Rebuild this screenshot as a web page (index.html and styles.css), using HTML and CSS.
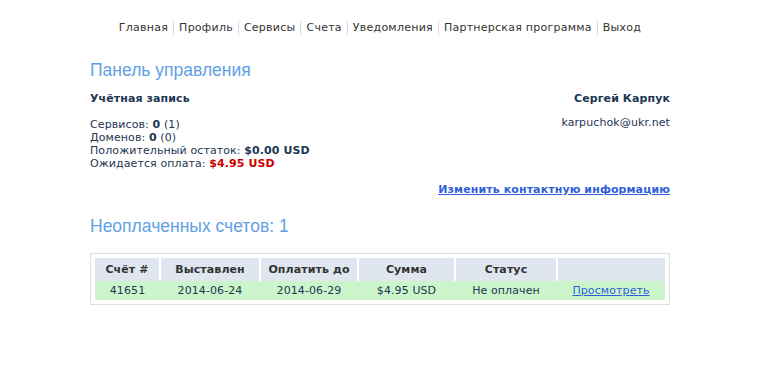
FILE: index.html
```html
<!DOCTYPE html>
<html lang="ru">
<head>
    <meta charset="UTF-8">
    <title>Панель управления</title>
    <link rel="stylesheet" href="styles.css">
</head>
<body>
    <div class="nav">
        <a href="#">Главная</a><span class="sep"></span>
        <a href="#">Профиль</a><span class="sep"></span>
        <a href="#">Сервисы</a><span class="sep"></span>
        <a href="#">Счета</a><span class="sep"></span>
        <a href="#">Уведомления</a><span class="sep"></span>
        <a href="#">Партнерская программа</a><span class="sep"></span>
        <a href="#">Выход</a>
    </div>

    <div class="page">
        <h1>Панель управления</h1>

        <div class="account">
            <div class="account-left">
                <h3>Учётная запись</h3>
                <p>
                    Сервисов: <b>0</b> (1)<br>
                    Доменов: <b>0</b> (0)<br>
                    Положительный остаток: <b>$0.00 USD</b><br>
                    Ожидается оплата: <b class="due">$4.95 USD</b>
                </p>
            </div>
            <div class="account-right">
                <h3>Сергей Карпук</h3>
                <p>karpuchok@ukr.net</p>
            </div>
        </div>

        <div class="edit-link"><a href="#">Изменить контактную информацию</a></div>

        <h2>Неоплаченных счетов: 1</h2>

        <div class="invoices">
            <table>
                <tr>
                    <th class="c1">Счёт #</th>
                    <th class="c2">Выставлен</th>
                    <th class="c3">Оплатить до</th>
                    <th class="c4">Сумма</th>
                    <th class="c5">Статус</th>
                    <th class="c6"></th>
                </tr>
                <tr class="unpaid">
                    <td>41651</td>
                    <td>2014-06-24</td>
                    <td>2014-06-29</td>
                    <td>$4.95 USD</td>
                    <td>Не оплачен</td>
                    <td><a href="#">Просмотреть</a></td>
                </tr>
            </table>
        </div>
    </div>
</body>
</html>
```

FILE: styles.css
```css
body {
    font-family: "DejaVu Sans", Verdana, sans-serif;
    font-size: 11px;
    color: #1e3652;
    margin: 0;
    background: #fff;
}
a {
    color: #2f5fd8;
}
.nav {
    display: flex;
    justify-content: center;
    align-items: center;
    padding-top: 21px;
    height: 14px;
    line-height: 14px;
    letter-spacing: 0.25px;
}
.nav a {
    color: #333;
    text-decoration: none;
}
.nav .sep {
    display: inline-block;
    width: 1px;
    height: 14px;
    background: #d6d9dc;
    margin: 0 5px;
}
.page {
    width: 580px;
    margin: 0 auto;
    letter-spacing: 0.1px;
}
h1, h2 {
    font-family: "Liberation Sans", Arial, sans-serif;
    letter-spacing: 0;
    font-weight: normal;
    color: #62a0e4;
    font-size: 17.5px;
    margin: 0;
}
h1 {
    margin-top: 24px;
    line-height: 22px;
}
h3 {
    font-size: 11px;
    font-weight: bold;
    margin: 0;
}
.account {
    display: flex;
    justify-content: space-between;
    margin-top: 11px;
}
.account h3 {
    line-height: 14px;
}
.account p {
    margin: 12px 0 0;
    line-height: 13px;
}
.account-right {
    text-align: right;
}
.account-right p {
    margin-top: 10px;
}
.due {
    color: #cc0000;
}
.edit-link {
    text-align: right;
    margin-top: 13px;
    font-weight: bold;
    line-height: 14px;
}
.edit-link a {
    color: #2f5fd8;
}
h2 {
    margin-top: 18px;
    line-height: 22px;
}
.invoices {
    margin-top: 16px;
    border: 1px solid #dedede;
    padding: 4px;
}
table {
    width: 100%;
    border-collapse: collapse;
}
th {
    background: #dfe6f0;
    color: #333;
    height: 23px;
    padding: 0;
    border-right: 2px solid #fff;
}
th:last-child {
    border-right: none;
}
td {
    background: #ccf5cc;
    text-align: center;
    height: 19px;
    padding: 0;
}
.c1 { width: 64px; }
.c2 { width: 98px; }
.c3 { width: 96px; }
.c4 { width: 95px; }
.c5 { width: 100px; }
```
